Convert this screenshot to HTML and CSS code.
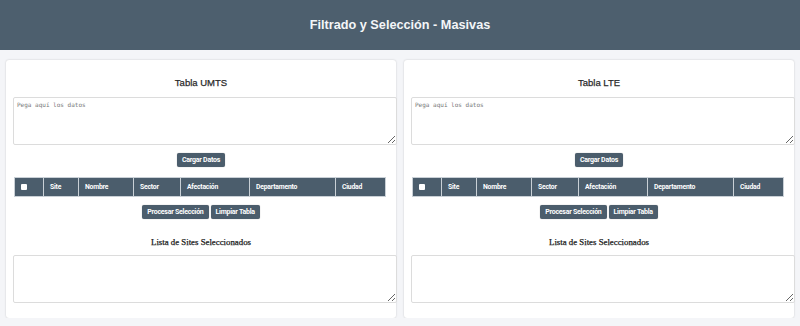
FILE: index.html
```html
<!DOCTYPE html>
<html lang="es">
<head>
    <meta charset="UTF-8">
    <meta name="viewport" content="width=device-width, initial-scale=1.0">
    <title>Filtrado y Selección - Masivas</title>
    <link rel="stylesheet" href="styles.css">
</head>
<body>
    <header class="header">
        <h1>Filtrado y Selección - Masivas</h1>
    </header>

    <div class="container">
        <!-- Tabla UMTS -->
        <div class="panel">
            <h2>Tabla UMTS</h2>
            <textarea class="input-data" placeholder="Pega aquí los datos"></textarea>
            <div class="actions">
                <button>Cargar Datos</button>
            </div>
            <table class="data-table">
                <thead>
                    <tr>
                        <th class="col-check"><span class="check"></span></th>
                        <th class="col-site">Site</th>
                        <th class="col-nombre">Nombre</th>
                        <th class="col-sector">Sector</th>
                        <th class="col-afect">Afectación</th>
                        <th class="col-depto">Departamento</th>
                        <th>Ciudad</th>
                    </tr>
                </thead>
                <tbody></tbody>
            </table>
            <div class="actions">
                <button>Procesar Selección</button>
                <button>Limpiar Tabla</button>
            </div>
            <h3>Lista de Sites Seleccionados</h3>
            <textarea class="output-data"></textarea>
        </div>

        <!-- Tabla LTE -->
        <div class="panel">
            <h2>Tabla LTE</h2>
            <textarea class="input-data" placeholder="Pega aquí los datos"></textarea>
            <div class="actions">
                <button>Cargar Datos</button>
            </div>
            <table class="data-table">
                <thead>
                    <tr>
                        <th class="col-check"><span class="check"></span></th>
                        <th class="col-site">Site</th>
                        <th class="col-nombre">Nombre</th>
                        <th class="col-sector">Sector</th>
                        <th class="col-afect">Afectación</th>
                        <th class="col-depto">Departamento</th>
                        <th>Ciudad</th>
                    </tr>
                </thead>
                <tbody></tbody>
            </table>
            <div class="actions">
                <button>Procesar Selección</button>
                <button>Limpiar Tabla</button>
            </div>
            <h3>Lista de Sites Seleccionados</h3>
            <textarea class="output-data"></textarea>
        </div>
    </div>
</body>
</html>
```

FILE: styles.css
```css
body {
    font-family: "Liberation Sans", Arial, sans-serif;
    background-color: #f4f5f8;
    margin: 0;
    padding: 0;
}
.header {
    background: #4d5f6e;
    height: 50px;
    display: flex;
    align-items: center;
    justify-content: center;
}
.header h1 {
    margin: 0;
    color: #f4f6f8;
    font-size: 12.7px;
    font-weight: bold;
}
.container {
    display: flex;
    gap: 8px;
    padding: 10px 6px 0 6px;
}
.panel {
    flex: 1;
    background: white;
    padding: 16px 7px 15px 7px;
    border-radius: 3px;
    box-shadow: 0 0 2px rgba(0, 0, 0, 0.2);
}
.panel h2 {
    text-align: center;
    color: #2a2a2a;
    font-size: 9.5px;
    font-weight: normal;
    -webkit-text-stroke: 0.25px #2a2a2a;
    margin: 0 0 7px 0;
    line-height: 14px;
}
textarea {
    display: block;
    width: 100%;
    height: 40px;
    padding: 3px;
    border: 1px solid #dcdcdc;
    border-radius: 2px;
    font-family: "DejaVu Sans Mono", monospace;
    font-size: 6px;
    resize: vertical;
}
textarea::placeholder {
    color: #777;
}
.input-data {
    margin-bottom: 8px;
}
.output-data {
    height: 40px;
}
.actions {
    display: flex;
    justify-content: center;
    gap: 2px;
}
button {
    height: 14px;
    padding: 0 5px;
    font-family: Roboto, sans-serif;
    font-size: 7px;
    font-weight: bold;
    letter-spacing: -0.25px;
    border: none;
    background: #4b5d6c;
    color: white;
    cursor: pointer;
    border-radius: 2px;
    box-shadow: 0 0 1px rgba(0, 0, 0, 0.4);
}
.data-table {
    width: calc(100% - 4px);
    margin: 10px 1px 8px 1px;
    border-collapse: collapse;
    border: 1px solid #d6dadd;
}
.data-table th {
    background: #4b5d6c;
    color: white;
    height: 18px;
    padding: 0 6px;
    text-align: left;
    font-family: Roboto, sans-serif;
    font-size: 6.8px;
    font-weight: bold;
    letter-spacing: -0.2px;
    border: 1px solid #c9d0d6;
}
.col-check { width: 16px; }
.col-site { width: 22px; }
.col-nombre { width: 42px; }
.col-sector { width: 34px; }
.col-afect { width: 56px; }
.col-depto { width: 73px; }
.check {
    display: block;
    width: 6px;
    height: 6px;
    background: white;
    border-radius: 1px;
}
.panel h3 {
    text-align: center;
    font-family: "Liberation Serif", serif;
    font-size: 8.8px;
    font-weight: normal;
    -webkit-text-stroke: 0.25px #1a1a1a;
    color: #1a1a1a;
    margin: 17px 0 7px 0;
    line-height: 12px;
}
```
